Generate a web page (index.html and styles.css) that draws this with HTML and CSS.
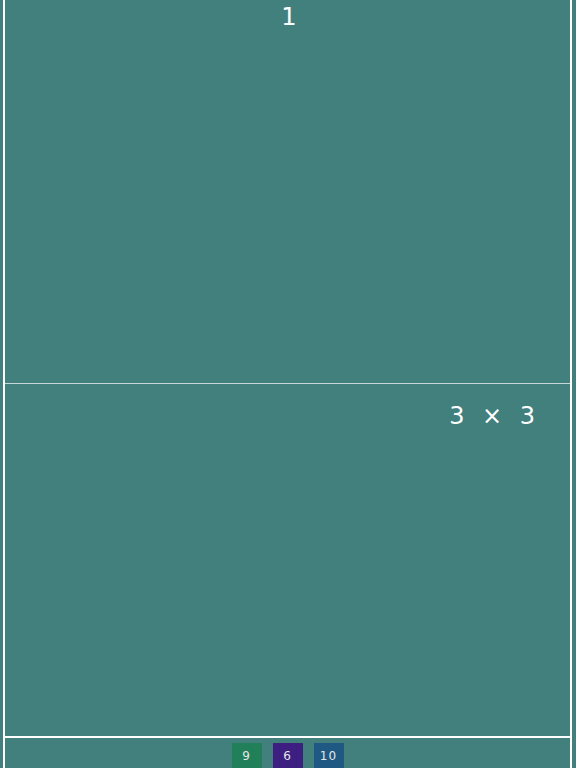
FILE: index.html
```html
<!DOCTYPE html>
<html>
<head>
<meta charset="utf-8">
<link rel="stylesheet" href="styles.css">
</head>
<body>
<div class="frame">
  <section class="panel top">
    <div class="count">1</div>
  </section>
  <section class="panel bottom">
    <div class="dims"><span>3</span><span>×</span><span>3</span></div>
  </section>
  <footer class="footer">
    <div class="chip green">9</div>
    <div class="chip purple">6</div>
    <div class="chip blue">10</div>
  </footer>
</div>
</body>
</html>
```
FILE: styles.css
```css
html, body {
  margin: 0;
  padding: 0;
}
body {
  width: 576px;
  height: 768px;
  overflow: hidden;
  background: #42807e;
  font-family: "DejaVu Sans", sans-serif;
  color: #ffffff;
}
.frame {
  margin: 0 4px 0 3px;
  height: 768px;
  border-left: 2px solid #ffffff;
  border-right: 2px solid #ffffff;
  display: flex;
  flex-direction: column;
}
.panel {
  box-sizing: border-box;
  flex-shrink: 0;
}
.top {
  height: 384px;
  border-bottom: 1px solid rgba(255, 255, 255, 0.7);
  display: flex;
  justify-content: center;
  padding-top: 3px;
  padding-left: 3px;
}
.count {
  font-size: 24px;
  line-height: 28px;
}
.bottom {
  height: 354px;
  border-bottom: 2px solid #ffffff;
  display: flex;
  justify-content: flex-end;
  padding-top: 18px;
  padding-right: 35px;
}
.dims {
  display: flex;
  gap: 17.5px;
  font-size: 24px;
  line-height: 28px;
  height: 28px;
}
.footer {
  flex: 1;
  min-height: 0;
  display: flex;
  justify-content: center;
  gap: 11px;
  padding-top: 5px;
}
.chip {
  flex-shrink: 0;
  width: 30px;
  height: 28px;
  font-size: 12px;
  line-height: 26px;
  text-align: center;
  color: #e6e6e6;
  letter-spacing: 1px;
}
.green { background: #21805a; }
.purple { background: #3d1f82; }
.blue { background: #1f5882; }
```
